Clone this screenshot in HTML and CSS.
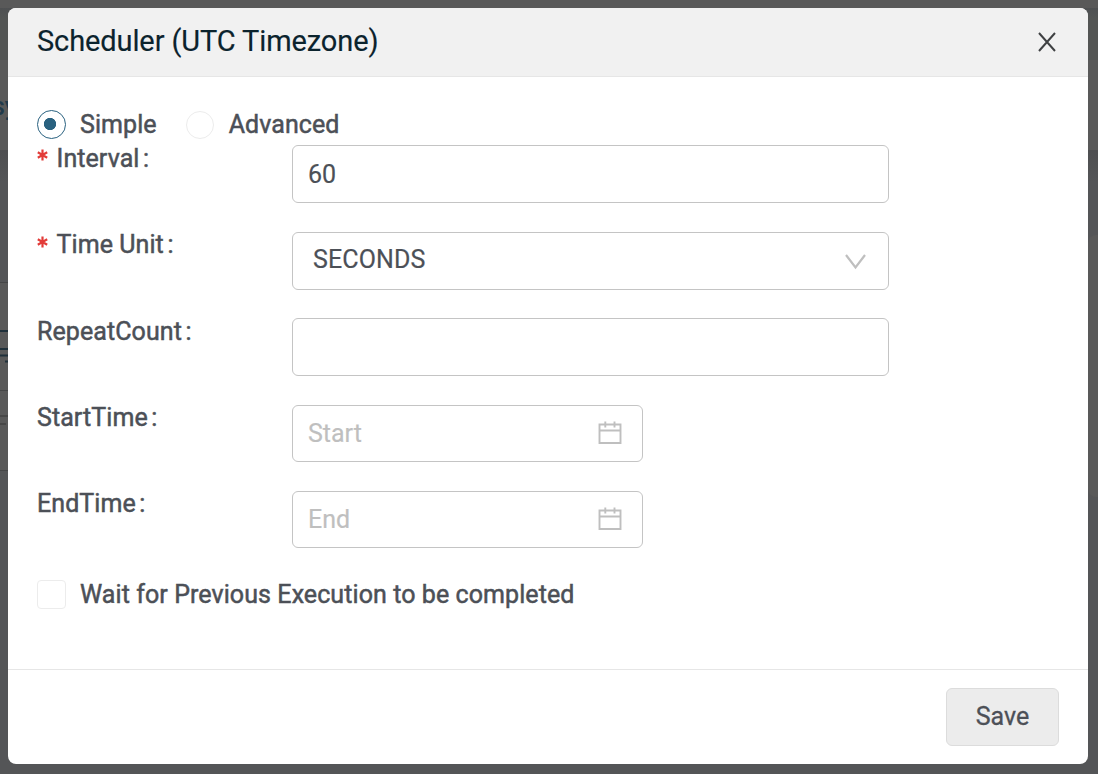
FILE: index.html
```html
<!DOCTYPE html>
<html lang="en">
<head>
<meta charset="utf-8">
<title>Scheduler</title>
<link rel="stylesheet" href="styles.css">
</head>
<body>
<div class="page">
  <div class="page-top"></div>
  <div class="page-toolbar"></div>
  <div class="page-heading">sy</div>
  <div class="page-content"></div>
  <div class="page-panel"></div>
  <svg class="page-lines" width="8" height="201" viewBox="0 0 8 201">
    <path d="M0 12.5h8M0 120.5h8M0 200.5h8" stroke="#454647"/>
    <path d="M0 61h8M0 79h8M0 85.500h8M5 91.500h3" stroke="#20313b" stroke-width="1.800"/>
    <path d="M0 146h8M0 154h6" stroke="#474747" stroke-width="2"/>
  </svg>
</div>
<main class="modal">
  <header class="modal-header">
    <h1 class="title"><span>Scheduler (UTC Timezone)</span></h1>
    <svg class="close" width="20" height="22" viewBox="0 0 20 22"><path d="M2 2L18 20M18 2L2 20" stroke="#3f4143" stroke-width="2" fill="none"/></svg>
  </header>
  <form class="modal-body">
    <div class="modes">
      <span class="radio radio-on"></span><span class="mode simple">Simple</span>
      <span class="radio radio-off"></span><span class="mode">Advanced</span>
    </div>
    <div class="row">
      <div class="label"><svg class="star" width="11" height="12" viewBox="0 0 11 12"><path d="M5.500 .5v11M.8 3.300l9.400 5.400M10.200 3.300L.8 8.700"/></svg><span>Interval</span><i>:</i></div>
      <div class="field"><span>60</span></div>
    </div>
    <div class="row">
      <div class="label"><svg class="star" width="11" height="12" viewBox="0 0 11 12"><path d="M5.500 .5v11M.8 3.300l9.400 5.400M10.200 3.300L.8 8.700"/></svg><span>Time Unit</span><i>:</i></div>
      <div class="field select"><span>SECONDS</span>
        <svg class="arrow" width="21" height="16" viewBox="0 0 21 16"><path d="M1 1l9.500 12.500L20 1" fill="none" stroke="#bfbfbf" stroke-width="2.200"/></svg>
      </div>
    </div>
    <div class="row">
      <div class="label"><span>RepeatCount</span><i>:</i></div>
      <div class="field"></div>
    </div>
    <div class="row">
      <div class="label"><span>StartTime</span><i>:</i></div>
      <div class="field date"><span>Start</span>
        <svg width="24" height="24" viewBox="0 0 24 24"><path d="M1.500 3.500h21v18.500h-21zM1.500 9.500h21M7.300 .5v6M16.500 .5v6" fill="none" stroke="#bfbfbf" stroke-width="1.900"/></svg>
      </div>
    </div>
    <div class="row">
      <div class="label"><span>EndTime</span><i>:</i></div>
      <div class="field date"><span>End</span>
        <svg width="24" height="24" viewBox="0 0 24 24"><path d="M1.500 3.500h21v18.500h-21zM1.500 9.500h21M7.300 .5v6M16.500 .5v6" fill="none" stroke="#bfbfbf" stroke-width="1.900"/></svg>
      </div>
    </div>
    <div class="wait"><span class="checkbox"></span><span>Wait for Previous Execution to be completed</span></div>
  </form>
  <footer class="modal-footer"><button class="save" type="button">Save</button></footer>
</main>
</body>
</html>
```

FILE: styles.css
```css
* { box-sizing: border-box; }
body {
  margin: 0;
  width: 1098px;
  height: 774px;
  padding: 8px 10px 10px 8px;
  overflow: hidden;
  position: relative;
  font: 25px/30px Roboto, "Liberation Sans", sans-serif;
  color: #4c5057;
}
.page { position: absolute; inset: 0; background: #545557; overflow: hidden; }
.page-top { height: 8px; background: #595959; }
.page-toolbar { height: 52px; background: linear-gradient(#4e5052, #535554 20%); }
.page-heading {
  height: 90px;
  padding-top: 32px;
  background: #595959;
  color: #20394a;
  font-weight: 500;
  text-indent: -8px;
}
.page-content { height: 32px; background: linear-gradient(#4e4f51, #545557); }
.page-panel { position: absolute; left: 1088px; top: 235px; width: 30px; height: 262px; border-radius: 8px; background: #595959; }
.page-lines { position: absolute; left: 0; top: 270px; height: 201px; background: linear-gradient(transparent 12px, #595959 12px); }
.modal {
  position: relative;
  height: 756px;
  display: flex;
  flex-direction: column;
  background: #fff;
  border-radius: 8px;
  overflow: hidden;
}
.modal-header {
  height: 69px;
  flex: none;
  padding: 0 32px 0 29px;
  display: flex;
  align-items: center;
  justify-content: space-between;
  background: #f1f1f1;
  border-bottom: 1px solid #e6e6e6;
}
.title { margin: 0 0 2px; font-size: 29px; line-height: 36px; font-weight: 400; letter-spacing: -0.11px; color: #0b232d; -webkit-text-stroke: 0.150px currentColor; }
.close { margin-right: -0.5px; }
.modal-body { flex: 1; padding: 32px 29px 0; }
.modes { height: 36.400px; padding-bottom: 5.400px; display: flex; align-items: center; }
.mode, .label, .wait { letter-spacing: 0.080px; -webkit-text-stroke: 0.5px currentColor; }
.radio { width: 29px; height: 29px; border-radius: 50%; margin-right: 14px; }
.radio-on { border: 1px solid #29617f; background: radial-gradient(circle at 12px 13px, #29617f 5.800px, transparent 6.500px); }
.radio-off { width: 28px; height: 28px; margin-right: 15px; border: 1px solid #ececec; margin-left: 29px; }
.row { height: 86.400px; display: grid; grid-template-columns: 255px 597px; align-items: start; }
.label { display: flex; align-items: center; height: 30px; margin-top: -1.600px; }
.label i { font-style: normal; margin-left: 3.500px; }
.star { margin: -7px 8.500px 0 0; fill: none; stroke: #e23c39; stroke-width: 2.200; }
.field { height: 58px; border: 1px solid #c4c4c4; border-radius: 6px; padding: 0 20px 0 15px; display: flex; align-items: center; justify-content: space-between; -webkit-text-stroke: 0.200px currentColor; }
.field span { padding-top: 2px; }
.select { padding-left: 20px; padding-right: 22px; letter-spacing: 0.120px; }
.select span { margin-top: -4px; }
.arrow { margin-top: 2px; }
.date { width: 351px; height: 57px; padding-right: 20.500px; color: #bfbfbf; }
.date span { padding-top: 1px; }
.wait { display: flex; align-items: center; gap: 14px; height: 30px; margin-top: 2px; }
.wait span:last-child { padding-top: 2px; }
.checkbox { width: 29px; height: 29px; border: 1px solid #ececec; border-radius: 4px; }
.modal-footer { height: 95px; border-top: 1px solid #e6e6e6; padding: 18px 29px; display: flex; justify-content: flex-end; }
.save {
  width: 113px;
  height: 58px;
  padding: 0 0 1px;
  font: inherit;
  color: inherit;
  background: #ececec;
  border: 1px solid #dcdcdc;
  border-radius: 6px;
  -webkit-text-stroke: 0.300px currentColor;
}
```
